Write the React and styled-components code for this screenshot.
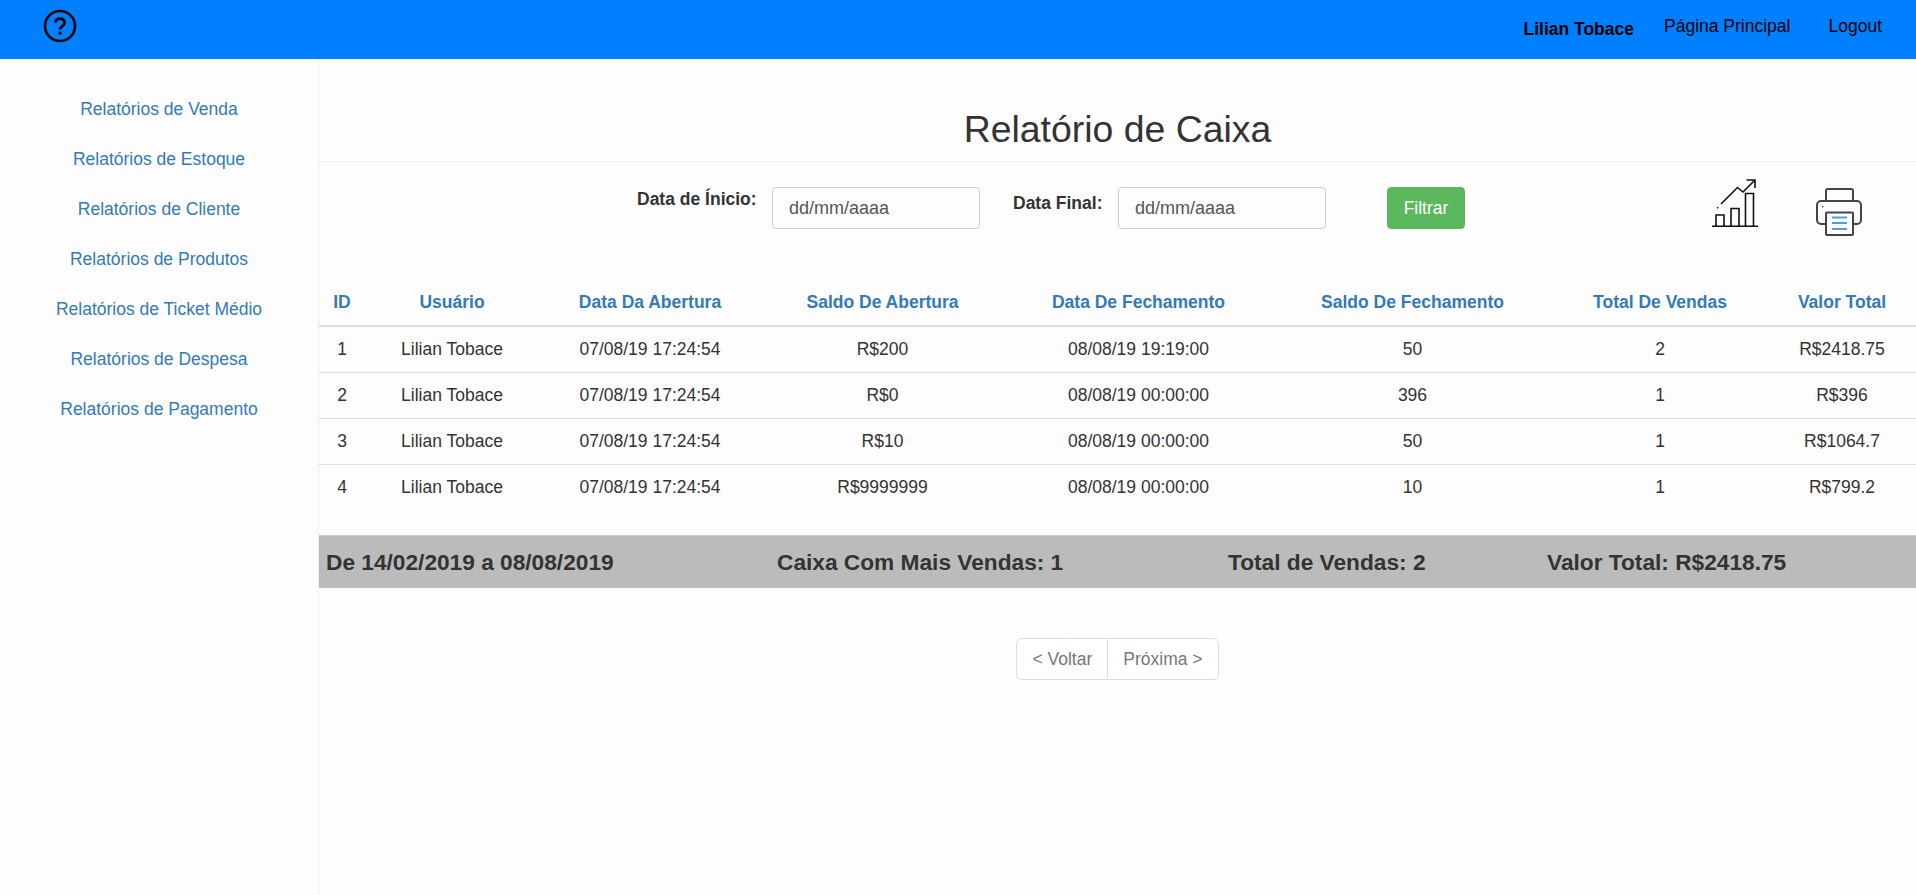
import React from "react";
import styled, { createGlobalStyle } from "styled-components";

const GlobalStyle = createGlobalStyle`
  html, body {
    margin: 0;
    padding: 0;
    background: #fdfdfd;
    font-family: "Liberation Sans", Arial, sans-serif;
    font-size: 17.5px;
    color: #333;
  }
  * { box-sizing: border-box; }
`;

const sideLinks = [
  "Relatórios de Venda",
  "Relatórios de Estoque",
  "Relatórios de Cliente",
  "Relatórios de Produtos",
  "Relatórios de Ticket Médio",
  "Relatórios de Despesa",
  "Relatórios de Pagamento",
];

const columns = [
  { title: "ID", width: 46 },
  { title: "Usuário", width: 174 },
  { title: "Data Da Abertura", width: 222 },
  { title: "Saldo De Abertura", width: 243 },
  { title: "Data De Fechamento", width: 269 },
  { title: "Saldo De Fechamento", width: 279 },
  { title: "Total De Vendas", width: 216 },
  { title: "Valor Total", width: 148 },
];

const rows = [
  ["1", "Lilian Tobace", "07/08/19 17:24:54", "R$200", "08/08/19 19:19:00", "50", "2", "R$2418.75"],
  ["2", "Lilian Tobace", "07/08/19 17:24:54", "R$0", "08/08/19 00:00:00", "396", "1", "R$396"],
  ["3", "Lilian Tobace", "07/08/19 17:24:54", "R$10", "08/08/19 00:00:00", "50", "1", "R$1064.7"],
  ["4", "Lilian Tobace", "07/08/19 17:24:54", "R$9999999", "08/08/19 00:00:00", "10", "1", "R$799.2"],
];

export default function App() {
  return (
    <Page>
      <GlobalStyle />
      <TopBar>
        <HelpIcon viewBox="0 0 34 34" aria-label="Ajuda">
          <circle cx="17" cy="17" r="15" fill="none" stroke="#000" strokeWidth="2.6" />
          <path d="M12.2 13.6a4.9 4.9 0 0 1 9.6 0c0 3.4-4.8 3.600-4.800 7" fill="none" stroke="#000" strokeWidth="2.8" />
          <rect x="15.500" y="22.600" width="3" height="3" />
        </HelpIcon>
        <TopNav>
          <UserName>Lilian Tobace</UserName>
          <TopLink $gap={38}>Página Principal</TopLink>
          <TopLink>Logout</TopLink>
        </TopNav>
      </TopBar>
      <Body>
        <SideBar>
          {sideLinks.map((link) => (
            <SideLink key={link}>{link}</SideLink>
          ))}
        </SideBar>
        <Main>
          <Title>Relatório de Caixa</Title>
          <FilterRow>
            <FilterLabel $top={2} $width={135}>Data de Ínicio:</FilterLabel>
            <DateInput placeholder="dd/mm/aaaa" $gap={33} />
            <FilterLabel $top={6} $width={105}>Data Final:</FilterLabel>
            <DateInput placeholder="dd/mm/aaaa" $gap={61} />
            <FilterButton type="button">Filtrar</FilterButton>
            <ChartIcon viewBox="0 0 46 48" aria-label="Gráfico">
              <g fill="none" stroke="#111" strokeWidth="1.6">
                <path d="M0 47.2h46" />
                <path d="M4 47v-11h8v11M19 47V29.500h8V47M33.500 47V14.500h8V47" />
                <path d="M9 25 25.500 8.500l5.500 4.500L42 2" />
                <path d="M34.500 1h8.500v8" />
              </g>
              <rect x="5" y="28" width="1.400" height="1.400" fill="#111" />
            </ChartIcon>
            <PrinterIcon viewBox="0 0 46 48" aria-label="Imprimir">
              <g fill="none" stroke="#444" strokeWidth="2">
                <path d="M10 13V3a2 2 0 0 1 2-2h23a2 2 0 0 1 2 2v10" />
                <path d="M10 36H5a4 4 0 0 1-4-4V17a4 4 0 0 1 4-4h36a4 4 0 0 1 4 4v15a4 4 0 0 1-4 4h-5" />
                <rect x="10" y="24.500" width="27" height="22.500" rx="1" fill="#fff" />
              </g>
              <path d="M16 29.500h15M16 35h15M16 41h15" stroke="#4a9fdc" strokeWidth="1.800" />
              <rect x="6" y="18" width="1.400" height="1.400" fill="#444" />
            </PrinterIcon>
          </FilterRow>
          <ReportTable>
            <colgroup>
              {columns.map((col) => (
                <col key={col.title} width={col.width} />
              ))}
            </colgroup>
            <thead>
              <tr>
                {columns.map((col) => (
                  <HeadCell key={col.title}>{col.title}</HeadCell>
                ))}
              </tr>
            </thead>
            <tbody>
              {rows.map((row, index) => (
                <tr key={row[0]}>
                  {row.map((value, cell) => (
                    <BodyCell key={cell} $first={index === 0}>{value}</BodyCell>
                  ))}
                </tr>
              ))}
            </tbody>
          </ReportTable>
          <SummaryBar>
            <span>De 14/02/2019 a 08/08/2019</span>
            <span>Caixa Com Mais Vendas: 1</span>
            <span>Total de Vendas: 2</span>
            <span>Valor Total: R$2418.75</span>
          </SummaryBar>
          <Pager>
            <PagerButton $side="left">&lt; Voltar</PagerButton>
            <PagerButton $side="right">Próxima &gt;</PagerButton>
          </Pager>
        </Main>
      </Body>
    </Page>
  );
}

const Page = styled.div`
  min-height: 895px;
  display: flex;
  flex-direction: column;
`;

const TopBar = styled.header`
  height: 59px;
  flex: none;
  background: #007fff;
  display: flex;
  justify-content: space-between;
  padding: 9px 34px 0 43px;
`;

const HelpIcon = styled.svg`
  width: 34px;
  height: 34px;
`;

const TopNav = styled.nav`
  display: flex;
  align-items: flex-start;
  color: #000;
`;

const UserName = styled.strong`
  margin: 11px 30px 0 0;
  line-height: 18px;
`;

const TopLink = styled.a`
  margin: 8px ${(p) => p.$gap || 0}px 0 0;
  line-height: 18px;
`;

const Body = styled.div`
  flex: 1;
  display: flex;
`;

const SideBar = styled.aside`
  width: 319px;
  flex: none;
  border-right: 1px solid #eee;
  padding-top: 41px;
  display: flex;
  flex-direction: column;
  gap: 32px;
  text-align: center;
`;

const SideLink = styled.a`
  color: #337ab7;
  line-height: 18px;
`;

const Main = styled.main`
  flex: 1;
  min-width: 0;
`;

const Title = styled.h1`
  margin: 0;
  height: 103px;
  padding-top: 48px;
  border-bottom: 1px solid #eee;
  font-size: 37.4px;
  font-weight: 400;
  line-height: 44px;
  text-align: center;
`;

const FilterRow = styled.div`
  display: flex;
  align-items: flex-start;
  padding: 25px 0 0 318px;
  height: 93px;
`;

const FilterLabel = styled.label`
  width: ${(p) => p.$width}px;
  margin-top: ${(p) => p.$top}px;
  font-weight: 700;
  line-height: 20px;
  white-space: nowrap;
`;

const DateInput = styled.input`
  width: 208px;
  height: 42px;
  margin-right: ${(p) => p.$gap}px;
  padding: 0 16px;
  border: 1px solid #ccc;
  border-radius: 4px;
  background: #fdfdfd;
  font: 18px "Liberation Sans", Arial, sans-serif;
  &::placeholder {
    color: #555;
    opacity: 1;
  }
`;

const FilterButton = styled.button`
  width: 78px;
  height: 42px;
  margin-right: 247px;
  padding: 0;
  border: 1px solid #5cb85c;
  border-radius: 4px;
  background: #5cb85c;
  color: #fff;
  font: 17.5px "Liberation Sans", Arial, sans-serif;
`;

const ChartIcon = styled.svg`
  width: 46px;
  height: 48px;
  margin: -8px 58px 0 0;
  flex: none;
`;

const PrinterIcon = styled.svg`
  width: 46px;
  height: 48px;
  margin-top: 1px;
  flex: none;
`;

const ReportTable = styled.table`
  width: 100%;
  table-layout: fixed;
  border-collapse: collapse;
`;

const HeadCell = styled.th`
  height: 71px;
  padding: 0 0 12px;
  vertical-align: bottom;
  border-bottom: 2px solid #ddd;
  color: #337ab7;
  font-weight: 700;
  line-height: 22px;
  text-align: center;
`;

const BodyCell = styled.td`
  height: 46px;
  padding: 0;
  border-top: ${(p) => (p.$first ? "0" : "1px solid #ddd")};
  text-align: center;
`;

const SummaryBar = styled.div`
  margin-top: 25px;
  height: 53px;
  background: #bbb;
  border-top: 1px solid #ccc;
  display: grid;
  grid-template-columns: 451px 451px 319px 1fr;
  align-items: center;
  padding-left: 7px;
  font-size: 22.7px;
  font-weight: 700;
`;

const Pager = styled.div`
  margin-top: 50px;
  display: flex;
  justify-content: center;
`;

const PagerButton = styled.a`
  height: 42px;
  display: flex;
  align-items: center;
  padding: 0 15px;
  color: #777;
  background: #fff;
  border: 1px solid #ddd;
  margin-left: ${(p) => (p.$side === "right" ? "-1px" : "0")};
  border-radius: ${(p) => (p.$side === "left" ? "6px 0 0 6px" : "0 6px 6px 0")};
`;
